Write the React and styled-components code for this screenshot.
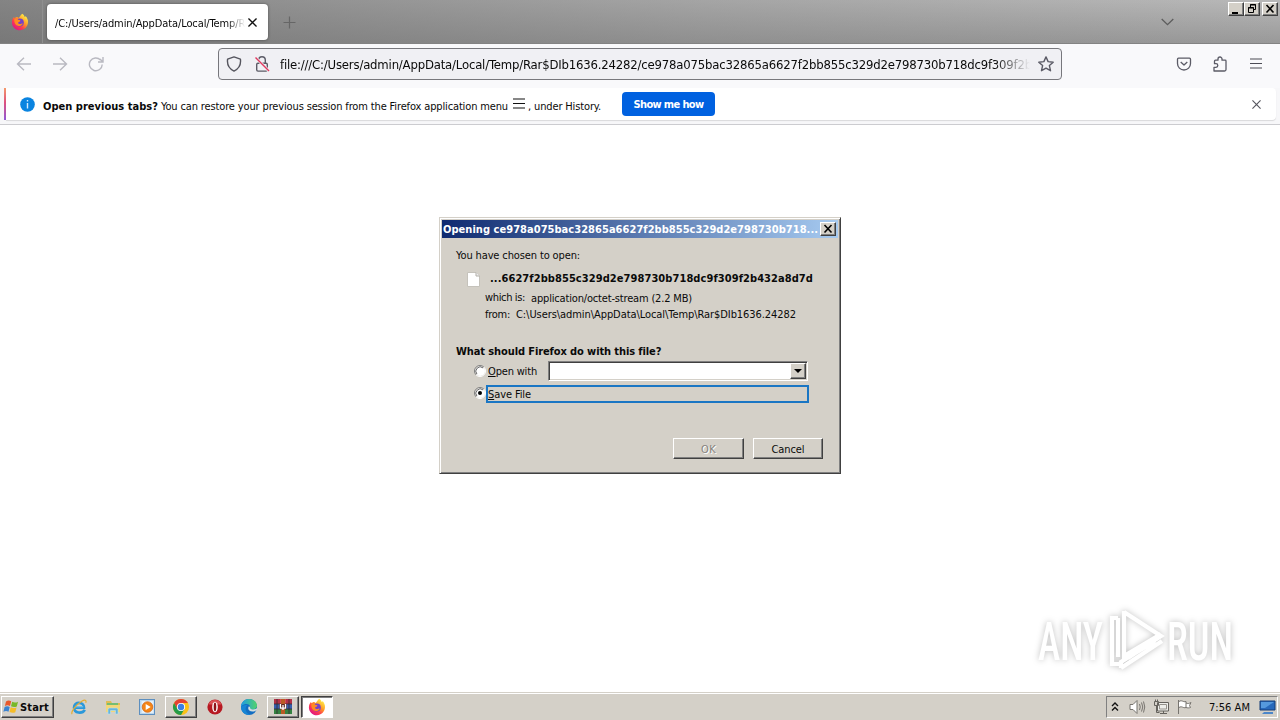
import React, { useLayoutEffect, useRef } from "react";
import styled, { createGlobalStyle, css } from "styled-components";

const Global = createGlobalStyle`
  * { box-sizing: border-box; }
  html, body { margin: 0; background: #fff; overflow: hidden; }
  body { font-family: "DejaVu Sans Condensed", "DejaVu Sans", sans-serif; font-stretch: condensed; font-size: 11px; color: #0a0a0a; }
  svg { display: block; flex: none; }
`;

const Label = styled.span`
  display: block;
  flex: none;
  width: ${(p) => p.$width}px;
  height: 16px;
  line-height: 18px;
  white-space: pre;
  font-size: ${(p) => p.$size || 11}px;
  font-weight: ${(p) => (p.$bold ? 700 : 400)};
  color: ${(p) => p.$color || "inherit"};
`;

/* Spreads the letters so that the label takes exactly the given width. */
function Text({ width, children, ...rest }) {
  const inner = useRef(null);
  useLayoutEffect(() => {
    const el = inner.current;
    el.style.letterSpacing = "0px";
    const natural = el.getBoundingClientRect().width;
    el.style.letterSpacing = `${(width - natural) / el.textContent.length}px`;
  });
  return (
    <Label $width={width} {...rest}>
      <span ref={inner}>{children}</span>
    </Label>
  );
}

const raised = css`
  background: #d4d0c8;
  border: 1px solid;
  border-color: #fff #404040 #404040 #fff;
  box-shadow: inset -1px -1px 0 #808080;
`;

const Screen = styled.div`
  position: relative;
  display: flex;
  flex-direction: column;
  width: 1280px;
  height: 720px;
  background: #fff;
`;

const TabStrip = styled.header`
  display: flex;
  flex: none;
  height: 44px;
  border-bottom: 1px solid #838383;
  background: linear-gradient(90deg, rgba(100, 100, 100, 0.62), rgba(120, 120, 120, 0.3) 55%, rgba(150, 150, 150, 0)), linear-gradient(#b8b8b8, #999);
`;
const PinnedArea = styled.div`
  width: 43px;
  margin: 0 4px 0 0;
  padding: 13px 0 0 11px;
  border-right: 1px solid #8f8f8f;
`;
const Tab = styled.div`
  display: flex;
  align-items: center;
  width: 221px;
  height: 36px;
  margin-top: 4px;
  padding-left: 8px;
  background: #fff;
  border-radius: 4px;
  box-shadow: 0 0 3px rgba(0, 0, 0, 0.45);
`;
const FadeClip = styled.div`
  overflow: hidden;
  width: ${(p) => p.$width}px;
  padding-top: ${(p) => p.$top || 0}px;
  mask-image: linear-gradient(90deg, #000 calc(100% - ${(p) => p.$fade}px), transparent);
`;
const NewTab = styled.div`
  padding: 16px 0 0 15px;
`;
const TabList = styled.div`
  margin-left: auto;
  padding: 18px 54px 0 0;
`;
const WindowButtons = styled.div`
  display: flex;
  padding: 2px 2px 0 0;
  height: 16px;
`;
const CaptionButton = styled.div`
  ${raised}
  width: 16px;
  height: 14px;
  margin-left: ${(p) => p.$gap || 0}px;
`;

const NavBar = styled.nav`
  display: flex;
  flex: none;
  align-items: center;
  height: 44px;
  padding-bottom: 4px;
  background: #f9f9fb;
`;
const NavGroup = styled.div`
  display: flex;
  gap: 20px;
  width: 218px;
  padding-left: 16px;
`;
const UrlBar = styled.div`
  display: flex;
  align-items: center;
  width: 844px;
  height: 32px;
  padding-left: 7px;
  background: #f0f0f4;
  border: 1px solid #77777c;
  border-radius: 4px;
`;
const UrlIcons = styled.div`
  display: flex;
  gap: 12px;
  width: 54px;
`;
const ToolGroup = styled.div`
  display: flex;
  gap: 20px;
  margin-left: 114px;
`;

const Notice = styled.section`
  display: flex;
  flex: none;
  height: 37px;
  padding: 0 4px 4px;
  background: #f7f7f9;
  border-bottom: 1px solid #ccccd0;
`;
const NoticeStripe = styled.div`
  width: 2px;
  height: 32px;
  background: linear-gradient(#f59a6c, #e0527f 45%, #9059d8);
`;
const NoticeBody = styled.div`
  display: flex;
  align-items: center;
  width: 1270px;
  height: 32px;
  padding: 0 15px 0 14px;
  background: #fff;
  border-radius: 0 4px 4px 0;
  box-shadow: 0 1px 1px rgba(0, 0, 0, 0.12);
`;
const NoticeText = styled.div`
  display: flex;
  padding: 3px 0 0 8px;
  width: 580px;
  gap: 3px;
`;
const PrimaryButton = styled.div`
  display: flex;
  align-items: center;
  justify-content: center;
  width: 93px;
  height: 24px;
  margin: 0 auto 0 7px;
  background: #0061e0;
  border-radius: 4px;
`;

const Page = styled.main`
  flex: 1;
`;

const Watermark = styled.svg`
  position: absolute;
  left: 1030px;
  top: 600px;
  filter: drop-shadow(0 0 3px rgba(0, 0, 0, 0.26));
`;

const Dialog = styled.div`
  position: absolute;
  left: 439px;
  top: 217px;
  width: 402px;
  height: 257px;
  padding: 2px;
  background: #d4d0c8;
  border: 1px solid;
  border-color: #d4d0c8 #404040 #404040 #d4d0c8;
  box-shadow: inset 1px 1px 0 #fff, inset -1px -1px 0 #808080;
`;
const DialogTitle = styled.div`
  display: flex;
  align-items: center;
  height: 18px;
  padding: 0 2px 0 1px;
  background: linear-gradient(90deg, #0f2a70, #a6caf0);
`;
const DialogBody = styled.div`
  display: flex;
  flex-direction: column;
  padding: 9px 15px 0 14px;
`;
const Row = styled.div`
  display: flex;
  height: ${(p) => p.$height}px;
  padding-left: ${(p) => p.$indent || 0}px;
  gap: ${(p) => p.$gap || 0}px;
`;
const FileIcon = styled.div`
  padding-top: 2px;
`;
const Nudge = styled.div`
  flex: none;
  padding: ${(p) => p.$top || 0}px 0 0 ${(p) => p.$left || 0}px;
`;
const Combo = styled.div`
  display: flex;
  justify-content: flex-end;
  width: 260px;
  height: 20px;
  margin-left: 11px;
  background: #fff;
  border: 1px solid;
  border-color: #808080 #fff #fff #808080;
  box-shadow: inset 1px 1px 0 #404040, inset -1px -1px 0 #d4d0c8;
  padding: 1px;
`;
const ComboButton = styled.div`
  ${raised}
  display: flex;
  align-items: center;
  justify-content: center;
  width: 16px;
  height: 16px;
`;
const FocusedOption = styled.div`
  width: 323px;
  height: 18px;
  border: 2px solid #1a76c4;
`;
const OptionLabel = styled.div`
  margin-top: -1px;
`;
const Buttons = styled.div`
  display: flex;
  justify-content: flex-end;
  gap: 9px;
  margin-top: 35px;
`;
const ClassicButton = styled.div`
  ${raised}
  display: flex;
  align-items: center;
  justify-content: center;
  width: ${(p) => p.$width}px;
  height: 21px;
  color: ${(p) => (p.$disabled ? "#86837d" : "#0a0a0a")};
  text-shadow: ${(p) => (p.$disabled ? "1px 1px 0 #fff" : "none")};
`;

const Taskbar = styled.footer`
  display: flex;
  flex: none;
  height: 28px;
  padding: 3px 2px 1px 1px;
  background: #d4d0c8;
  border-top: 1px solid #d4d0c8;
  box-shadow: inset 0 1px 0 #fff;
`;
const StartButton = styled.div`
  ${raised}
  display: flex;
  align-items: center;
  width: 53px;
  height: 22px;
  margin-right: 9px;
  padding-left: 1px;
`;
const TaskItem = styled.div`
  display: flex;
  align-items: center;
  justify-content: center;
  width: 32px;
  height: 22px;
  margin-right: 2px;
  ${(p) => p.$state === "open" && raised}
  ${(p) =>
    p.$state === "active" &&
    css`
      background: #fff;
      border: 1px solid;
      border-color: #404040 #fff #fff #404040;
      box-shadow: inset 1px 1px 0 #808080;
    `}
`;
const Tray = styled.div`
  display: flex;
  align-items: center;
  width: 172px;
  height: 22px;
  margin-left: auto;
  padding: 0 0 0 4px;
  border: 1px solid;
  border-color: #808080 #fff #fff #808080;
`;
const TrayIcons = styled.div`
  display: flex;
  gap: 6px;
  margin-left: 9px;
`;
const Clock = styled.div`
  margin: 0 9px 0 15px;
`;

const Cross = ({ size = 8, color = "#222", w = 1.2 }) => (
  <svg width={size} height={size} viewBox="0 0 8 8" fill="none" stroke={color} strokeWidth={w}>
    <path d="M.4.4l7.2 7.2M7.6.4L.4 7.6" />
  </svg>
);

const Firefox = ({ size = 18 }) => (
  <svg width={size} height={size} viewBox="0 0 18 18">
    <defs>
      <linearGradient id="fox" x1="0.85" y1="0.1" x2="0.2" y2="0.9">
        <stop offset="0" stopColor="#fff04a" />
        <stop offset="0.4" stopColor="#ff9a26" />
        <stop offset="0.7" stopColor="#ff3d4d" />
        <stop offset="1" stopColor="#e01882" />
      </linearGradient>
    </defs>
    <path fill="url(#fox)" d="M11.2.8c1.6 1 2.2 2.2 2.5 3.1 1-.1.8-.9.8-.9 1.7 1.6 2.7 4 2.5 6.3-.3 4.5-3.7 7.9-8.1 7.9S.9 13.700.9 9.400c0-2.200.800-4.200 2.200-5.700l.200 1.500L5 4.200c1.400-.300 2.100.100 2.500.700 1.300-.300 1.600-2.700 3.700-4.100z" />
    <circle cx="8.8" cy="9.600" r="4" fill="#7542c9" />
    <path fill="#ff8b21" d="M3.300 6.200c2-.8 3.500 0 4.300.9 1.400 0 2 .4 1.700.9-.3.800-1.500.800-2 1.300-.500.900.300 1.800 1.500 1.700 1.500-.100 2.200-.800 3-.500-.800 2-2.700 2.800-4.500 2.500C4.500 12.400 3 10 3.300 6.200z" />
  </svg>
);

const Shield = () => (
  <svg width="16" height="16" viewBox="0 0 16 16" fill="none" stroke="#55555e" strokeWidth="1.4">
    <path d="M8 .9l6.400 2.300c.500 3.600-.5 9-6.400 11.900C2.100 12.200 1.100 6.800 1.600 3.200z" strokeLinejoin="round" />
  </svg>
);
const BrokenLock = () => (
  <svg width="16" height="16" viewBox="0 0 16 16" fill="none" stroke="#5b5b66" strokeWidth="1.4">
    <rect x="2.700" y="7.300" width="10.600" height="7.800" rx="1.300" />
    <path d="M4.700 7V4a3.300 3.300 0 0 1 6.600 0v3" />
    <path d="M1.500 1.500l13.500 13.500" stroke="#f0f0f4" strokeWidth="3" />
    <path d="M1.500 1.500l13.500 13.500" stroke="#df3a60" />
  </svg>
);
const Star = () => (
  <svg width="16" height="16" viewBox="0 0 16 16" fill="none" stroke="#5b5b66" strokeWidth="1.400" strokeLinejoin="round">
    <path d="M8 .9l2.100 4.700 5.100.600-3.800 3.400 1.100 5.100L8 12.200l-4.500 2.500 1.100-5.100L.8 6.200l5.100-.600z" />
  </svg>
);
const Menu = ({ color = "#4c4c55" }) => (
  <svg width="12" height="11" viewBox="0 0 12 11" stroke={color} strokeWidth="1.200">
    <path d="M0 1h12M0 5.500h12M0 10h12" />
  </svg>
);

const Radio = ({ checked }) => (
  <svg width="12" height="12" viewBox="0 0 12 12">
    <circle cx="6" cy="6" r="5" fill="#fff" />
    <path d="M2.100 9.900A5.500 5.500 0 0 1 9.900 2.100" fill="none" stroke="#808080" />
    <path d="M2.900 9.100A4.400 4.400 0 0 1 9.100 2.900" fill="none" stroke="#404040" strokeWidth=".8" />
    <path d="M2.100 9.900A5.500 5.500 0 0 0 9.900 2.100" fill="none" stroke="#fff" />
    {checked && <circle cx="6" cy="6" r="2" fill="#000" />}
  </svg>
);

const StartLogo = () => (
  <svg width="17" height="16" viewBox="0 0 17 16">
    <path d="M3 2.500C5 1 6.800 1.500 8.200 2.300L7 7C5.400 6.100 3.700 6 1.900 7z" fill="#e9592b" />
    <path d="M9.200 2.800c2 1 3.700 1 5.800-.1l-1.200 4.700c-1.900 1-3.700.900-5.800-.100z" fill="#78b82a" />
    <path d="M1.600 8c1.700-.9 3.400-.9 5.100 0l-1.200 4.700c-1.700-.9-3.300-.9-5.100.1z" fill="#3b83d0" />
    <path d="M7.700 8.300c2 .9 3.800 1 5.800.1l-1.200 4.800c-2 .9-3.800.7-5.800-.2z" fill="#f5bd29" />
  </svg>
);
const Explorer = () => (
  <svg width="18" height="18" viewBox="0 0 18 18" fill="none">
    <path d="M14.800 11.800C12.500 16 4 15.700 4 9.500S13.900 3.300 14 9.600H5.500" stroke="#2a98da" strokeWidth="2.600" />
    <path d="M5.600 8.800h7.600" stroke="#80caee" strokeWidth="1" />
    <path d="M2.200 16.200C.3 14.200 5.700 6.800 11.800 3.200c3-1.800 5-1.300 3.900 1.600" stroke="#e5ad31" strokeWidth="1.200" />
  </svg>
);
const Folder = () => (
  <svg width="18" height="18" viewBox="0 0 18 18">
    <path d="M2 3h5l1 2h8v9H2z" fill="#e0bd55" />
    <path d="M3 5h11v3H3z" fill="#75bd72" />
    <path d="M2 7h14v7H2z" fill="#f3d778" />
    <path d="M4 16v-4.500q0-1.500 1.500-1.500h7q1.500 0 1.500 1.500V16h-2.500v-3.500h-5V16z" fill="#67b4db" stroke="#b9e2f1" strokeWidth=".6" />
  </svg>
);
const MediaPlayer = () => (
  <svg width="18" height="18" viewBox="0 0 18 18">
    <rect x="1.500" y="1.500" width="15" height="15" fill="#b9d7ef" stroke="#5d8fbf" />
    <rect x="3.500" y="3" width="12" height="12" fill="#e4f0f8" />
    <circle cx="9.500" cy="9" r="5.300" fill="#f48516" stroke="#d36112" strokeWidth=".7" />
    <path d="M7.700 6l5 3-5 3z" fill="#fff" />
  </svg>
);
const Chrome = () => (
  <svg width="18" height="18" viewBox="0 0 18 18">
    <circle cx="9" cy="9" r="8" fill="#fbc116" />
    <path d="M2.070 5A8 8 0 0 1 15.930 5H9L5.500 11z" fill="#e34133" />
    <path d="M2.070 5A8 8 0 0 0 9 17l3.500-6H5.500z" fill="#259b48" />
    <circle cx="9" cy="9" r="4.100" fill="#fff" />
    <circle cx="9" cy="9" r="3.200" fill="#397fe5" />
  </svg>
);
const Opera = () => (
  <svg width="18" height="18" viewBox="0 0 18 18">
    <circle cx="9" cy="9" r="7.600" fill="#b71922" />
    <path d="M2.500 6.500a7 7 0 0 1 13 0z" fill="#da5055" />
    <ellipse cx="9" cy="9" rx="2.800" ry="5.300" fill="#fff" />
    <ellipse cx="9" cy="9" rx="1.300" ry="4.400" fill="#8f1118" />
  </svg>
);
const Edge = () => (
  <svg width="18" height="18" viewBox="0 0 18 18">
    <defs>
      <linearGradient id="edge" x1="0" x2="1">
        <stop offset="0" stopColor="#1d9be5" />
        <stop offset="1" stopColor="#53d36a" />
      </linearGradient>
    </defs>
    <circle cx="9" cy="9" r="8" fill="#126dc2" />
    <path d="M1 9C1 4.500 4.600 1 9 1c4.700 0 8 3.300 8 6.600 0 2.700-2.200 3.900-4.500 3.900-2 0-2.700-.700-2.500-1.400C10.600 7 8 5.600 5.500 6.100 3 6.500 1.500 8 1 9z" fill="url(#edge)" />
    <path d="M8.700 8.500c-1.500 2.700.5 5.600 5.300 4.900l3-1.400v-1.700c-2.600 1.500-7.500 1.900-7-1.500z" fill="#d4dedd" />
    <path d="M6.200 8.500c-1.700 3 .3 7 4.300 8.300-5 1.100-9.200-2.800-9.500-7C2.300 7 5 6.500 7.500 7.200z" fill="#1785d4" />
  </svg>
);
const WinRar = () => (
  <svg width="20" height="18" viewBox="0 0 20 18">
    <rect x="1" y="1" width="6" height="5" fill="#b53045" />
    <rect x="7" y="1" width="6" height="5" fill="#d44b51" />
    <rect x="13" y="1" width="6" height="5" fill="#b53045" />
    <rect x="1" y="6" width="18" height="5" fill="#375fae" />
    <rect x="1" y="11" width="18" height="5" fill="#348241" />
    <path d="M1 6h18M1 11h18M4 1v15M16 1v15" stroke="#332a33" strokeWidth=".8" />
    <rect x="8" y="1" width="4" height="15" fill="#ba5b24" />
    <rect x="6.500" y="6" width="7" height="5" fill="#5a251c" />
    <path d="M7.500 6v4.200h5V6M10 7v5" fill="none" stroke="#fff" strokeWidth="1.300" />
  </svg>
);

const tasks = [
  [Explorer], [Folder], [MediaPlayer], [Chrome, "open"], [Opera], [Edge], [WinRar, "open"], [Firefox, "active"],
];

export default function App() {
  return (
    <Screen>
      <Global />
      <TabStrip>
        <PinnedArea><Firefox /></PinnedArea>
        <Tab>
          <FadeClip $width={190} $fade={18} $top={1}>
            <Text width={200}>/C:/Users/admin/AppData/Local/Temp/Rar</Text>
          </FadeClip>
          <Nudge $left={3}><Cross size={9} w={1.2} color="#111" /></Nudge>
        </Tab>
        <NewTab>
          <svg width="13" height="13" viewBox="0 0 13 13" stroke="#666" strokeWidth="1.200"><path d="M.5 6.500h12M6.500.5v12" /></svg>
        </NewTab>
        <TabList>
          <svg width="13" height="8" viewBox="0 0 13 8" fill="none" stroke="#5d5d5d" strokeWidth="1.300"><path d="M.700 1l5.800 5.700L12.300 1" /></svg>
        </TabList>
        <WindowButtons>
          <CaptionButton><svg width="14" height="12"><path d="M3 9h6v2H3z" /></svg></CaptionButton>
          <CaptionButton>
            <svg width="14" height="12" fill="none" stroke="#000"><path d="M5.500 4V1.500h5v5H9M5 2h6M3.500 4.500h5v5h-5zM3 5h6" /></svg>
          </CaptionButton>
          <CaptionButton $gap={2}>
            <svg width="14" height="12" stroke="#000" strokeWidth="1.600"><path d="M3.500 2l7 7.500M10.500 2l-7 7.500" /></svg>
          </CaptionButton>
        </WindowButtons>
      </TabStrip>

      <NavBar>
        <NavGroup>
          <svg width="16" height="16" viewBox="0 0 16 16" fill="none" stroke="#b9b9c1" strokeWidth="1.400"><path d="M15 8H1.500M8 1.800L1.500 8 8 14.200" /></svg>
          <svg width="16" height="16" viewBox="0 0 16 16" fill="none" stroke="#b9b9c1" strokeWidth="1.400"><path d="M1 8h13.500M8 1.800L14.500 8 8 14.200" /></svg>
          <svg width="16" height="16" viewBox="0 0 16 16" fill="none" stroke="#b9b9c1" strokeWidth="1.400"><path d="M14.200 8.500A6.400 6.400 0 1 1 12.500 4M15 1v5h-5M12 3l2.500 2.500" /></svg>
        </NavGroup>
        <UrlBar>
          <UrlIcons><Shield /><BrokenLock /></UrlIcons>
          <FadeClip $width={750} $fade={36}>
            <Text width={752} $size={13}>file:///C:/Users/admin/AppData/Local/Temp/Rar$DIb1636.24282/ce978a075bac32865a6627f2bb855c329d2e798730b718dc9f309f2b</Text>
          </FadeClip>
          <Nudge $left={8}><Star /></Nudge>
        </UrlBar>
        <ToolGroup>
          <svg width="16" height="16" viewBox="0 0 16 16" fill="none" stroke="#5b5b66" strokeWidth="1.300"><path d="M1.500 3.200q0-1 1-1h11q1 0 1 1v4.300a6.500 6.500 0 0 1-13 0zM4.700 6L8 9l3.300-3" strokeLinejoin="round" /></svg>
          <svg width="16" height="16" viewBox="0 0 16 16" fill="none" stroke="#5b5b66" strokeWidth="1.300"><path d="M2 15h10.500q1.500 0 1.500-1.500V5q0-.8-.8-.8H10V3a2 2 0 0 0-4 0v1.200H3.500q-1 0-1 1v2.500H4a1.800 1.800 0 0 1 0 3.600H2z" strokeLinejoin="round" /></svg>
          <Nudge $top={2} $left={2}><Menu /></Nudge>
        </ToolGroup>
      </NavBar>

      <Notice>
        <NoticeStripe />
        <NoticeBody>
          <svg width="15" height="15" viewBox="0 0 15 15"><circle cx="7.500" cy="7.500" r="7.300" fill="#0a84e0" /><path d="M7.500 3v1.500M7.500 6v5.500" stroke="#d3eaff" strokeWidth="1.400" /></svg>
          <NoticeText>
            <Text width={115} $bold>Open previous tabs?</Text>
            <Text width={347}>You can restore your previous session from the Firefox application menu</Text>
            <Nudge $left={2}><Menu color="#111" /></Nudge>
            <Text width={73}>, under History.</Text>
          </NoticeText>
          <PrimaryButton><Text width={70} $bold $color="#fff">Show me how</Text></PrimaryButton>
          <Cross size={9} color="#55555e" w={1} />
        </NoticeBody>
      </Notice>

      <Page />

      <Watermark width="220" height="90" viewBox="0 0 220 90">
        <g fill="#fff" fontFamily="Roboto, sans-serif" fontSize="53" fontWeight="500">
          <text x="8" y="60" textLength="65" lengthAdjust="spacingAndGlyphs">ANY</text>
          <text x="137" y="60" textLength="66" lengthAdjust="spacingAndGlyphs">RUN</text>
        </g>
        <g fill="none" stroke="#fff" strokeWidth="4.200">
          <path d="M94 12l37 24-33 22M94 11v45l37-22M88 18h-6v46h7M88 18v39M91 68l41-27M91 68v-6l34-21" />
        </g>
      </Watermark>

      <Dialog>
        <DialogTitle>
          <Text width={375} $bold $color="#fff">Opening ce978a075bac32865a6627f2bb855c329d2e798730b718...</Text>
          <CaptionButton $gap={2}>
            <svg width="14" height="12" stroke="#000" strokeWidth="1.600"><path d="M3.500 2l7 7.500M10.500 2l-7 7.500" /></svg>
          </CaptionButton>
        </DialogTitle>
        <DialogBody>
          <Row $height={23}><Text width={124}>You have chosen to open:</Text></Row>
          <Row $height={19} $indent={11} $gap={10}>
            <FileIcon>
              <svg width="13" height="15" viewBox="0 0 13 15"><path d="M.500.500h8.500l3.500 3.500v10.500H.500z" fill="#fff" stroke="#c5c2bb" /><path d="M9 .500v3.500h3.500" fill="#eee" stroke="#b2afa8" /></svg>
            </FileIcon>
            <Text width={323} $bold>...6627f2bb855c329d2e798730b718dc9f309f2b432a8d7d</Text>
          </Row>
          <Row $height={17} $indent={29} $gap={6}>
            <Text width={40}>which is:</Text>
            <Nudge $top={1}><Text width={161}>application/octet-stream (2.2 MB)</Text></Nudge>
          </Row>
          <Row $height={37} $indent={29} $gap={6}>
            <Text width={25}>from:</Text>
            <Text width={280}>C:\Users\admin\AppData\Local\Temp\Rar$DIb1636.24282</Text>
          </Row>
          <Row $height={18}><Text width={205} $bold>What should Firefox do with this file?</Text></Row>
          <Row $height={24} $indent={18}>
            <Nudge $top={4}><Radio /></Nudge>
            <Nudge $top={2} $left={2}><Text width={49}><u>O</u>pen with</Text></Nudge>
            <Combo>
              <ComboButton><svg width="8" height="4"><path d="M0 0h8L4 4z" /></svg></ComboButton>
            </Combo>
          </Row>
          <Row $height={18} $indent={18}>
            <Nudge $top={2}><Radio checked /></Nudge>
            <FocusedOption><OptionLabel><Text width={43}><u>S</u>ave File</Text></OptionLabel></FocusedOption>
          </Row>
          <Buttons>
            <ClassicButton $width={71} $disabled><Text width={15}>OK</Text></ClassicButton>
            <ClassicButton $width={70}><Text width={33}>Cancel</Text></ClassicButton>
          </Buttons>
        </DialogBody>
      </Dialog>

      <Taskbar>
        <StartButton><StartLogo /><Text width={29} $bold>Start</Text></StartButton>
        {tasks.map(([Icon, state], i) => (
          <TaskItem key={i} $state={state}><Icon /></TaskItem>
        ))}
        <Tray>
          <svg width="8" height="10" viewBox="0 0 8 10" fill="none" stroke="#111" strokeWidth="1.400"><path d="M1 4l3-3 3 3M1 8.500l3-3 3 3" /></svg>
          <TrayIcons>
            <svg width="18" height="16" viewBox="0 0 18 16" fill="none" stroke="#77746f">
              <path d="M2 5.500h3l4-4v13l-4-4H2z" fill="#fff" />
              <path d="M11.500 5q1.500 3 0 6M13.500 3.500q2.500 4.500 0 9M15.500 2.500q2.500 5.500 0 11" />
            </svg>
            <svg width="18" height="16" viewBox="0 0 18 16" fill="none" stroke="#65625d">
              <path d="M5.500 3.500h11v8.500h-11z" fill="#eeeeea" /><path d="M7.500 5.500h7v4.500h-7z" stroke="#96938d" /><path d="M8 14.500h7M11.500 12v2M2.500 2.500h4v4h-4zM3.500.5v2M5.500.5v2M4.500 7v6.500h3" />
            </svg>
            <svg width="18" height="16" viewBox="0 0 18 16" fill="#fff" stroke="#77746f">
              <path d="M2.500 1v14M3 2.500c3-2 4 1 7 0v6c-3 1-4-2-7 0M10 4c2 1 3 .500 5-.500l-1.500 3 1 2c-1.500.500-3 .500-4.500 0" />
            </svg>
          </TrayIcons>
          <Clock><Text width={41}>7:56 AM</Text></Clock>
          <svg width="17" height="16" viewBox="0 0 17 16">
            <path d="M1 2h15v9H1z" fill="#2869bb" stroke="#153d76" /><path d="M2 3h13L6 9H2z" fill="#5599dd" /><path d="M5 13h9v2H3z" fill="#4c87ca" />
          </svg>
        </Tray>
      </Taskbar>
    </Screen>
  );
}
